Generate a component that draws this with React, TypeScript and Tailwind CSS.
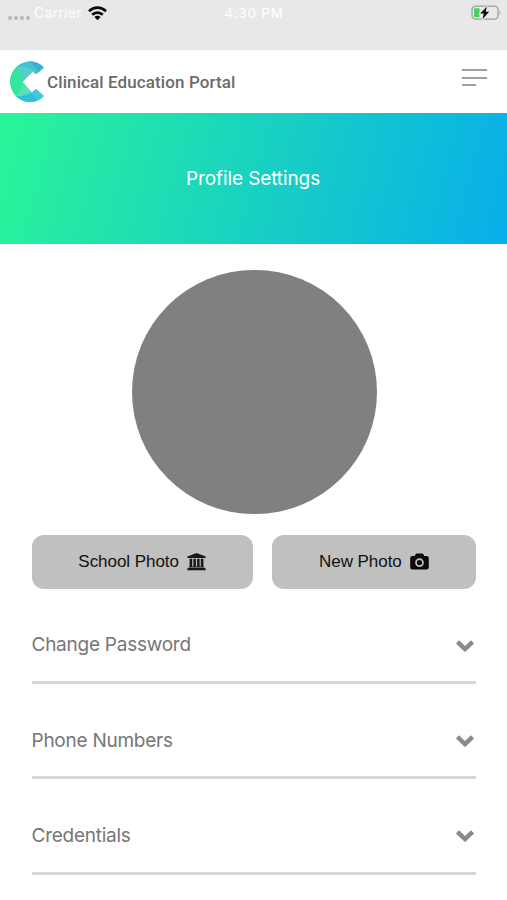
function Wifi() {
  return (
    <svg className="ml-[6px] h-[15px] w-[19px]" viewBox="0 0 19 15" fill="none" stroke="#0b0b0b" strokeWidth="2.7">
      <path d="M1 5.3C5.9 .5 13.1 .5 18 5.3" />
      <path d="M4.2 8.8C7.2 5.8 11.8 5.8 14.8 8.8" />
      <path d="M9.5 14.2 6.3 10.9Q9.5 8.4 12.7 10.9Z" fill="#0b0b0b" stroke="none" />
    </svg>
  );
}

function Battery() {
  return (
    <svg className="h-[16px] w-[31px]" viewBox="0 0 31 16">
      <rect x="1" y="1.2" width="26" height="13" rx="3.6" fill="#e9e9e9" stroke="#9d9d9d" strokeWidth="1.3" />
      <path d="M28.7 5.3Q30.6 7.6 28.7 10Z" fill="#9d9d9d" />
      <rect x="3" y="3.3" width="5.6" height="8.9" rx="1.2" fill="#42d35f" />
      <path d="M16 1.4 9.2 8.6H12.8L11.6 14.1 18.2 6.8H14.6Z" fill="#050505" stroke="#e8e8e8" strokeWidth="1.8" paintOrder="stroke" />
    </svg>
  );
}

function Logo() {
  return (
    <svg className="h-[42px] w-[35px]" viewBox="0 0 35 42">
      <defs>
        <clipPath id="letter">
          <path d="M33.8 6.4C30 2.3 25.5 .4 20.4 .4C9.2 .4 .2 9.4 .2 20.7S9.2 41 20.4 41C25.5 41 30 39 33.8 35L26 27.9 21.8 31.4 12.5 20.7 22.8 10.5 26 13.6Z" />
        </clipPath>
        <linearGradient id="tint" x1="0" x2="1">
          <stop stopColor="#27e59a" />
          <stop offset=".5" stopColor="#4fdcc0" />
          <stop offset="1" stopColor="#25b8d6" />
        </linearGradient>
      </defs>
      <g clipPath="url(#letter)">
        <path d="M0 0H35V42H0Z" fill="url(#tint)" />
        <path d="M6 6Q14 12 14 21Q14 29 6 35Q-6 21 6 6Z" fill="#35e79c" />
        <path d="M6 6Q13 0 20 0L28 8 20 16 12 9Z" fill="#3ec6d0" />
        <path d="M18 0Q26 5 28 12L35 7 29 0Z" fill="#3faed3" />
        <path d="M6 6Q17 5 25 10L14 22Q12 12 6 6Z" fill="#55cdd1" />
        <path d="M6 35Q12 29 13 20L23 31Q15 36 6 35Z" fill="#5bdfb9" />
        <path d="M6 35Q15 36 22 31L32 42H12Z" fill="#2fbfd6" />
        <path d="M20 32 26 27 35 35 30 40Z" fill="#44c8e0" />
      </g>
    </svg>
  );
}

function School() {
  return (
    <svg className="h-[18px] w-[19px]" viewBox="0 0 19 18" fill="#161616">
      <path d="M9.5 0 18.6 3.6V5H.4V3.6Z" />
      <path d="M2.6 5.8H5.2V13.4H6.4V5.8H8.9V13.4H10.1V5.8H12.6V13.4H13.8V5.8H16.4V13.4Q17.5 13.5 17.5 14.5H1.5Q1.5 13.5 2.6 13.4Z" />
      <path d="M1 15.1H18Q18.8 15.3 18.8 17.3H.2Q.2 15.3 1 15.1Z" />
    </svg>
  );
}

function Camera() {
  return (
    <svg className="h-[18px] w-[19px]" viewBox="0 0 19 18">
      <path d="M2.4 2.9H4.7L5.6 1.2Q6 .5 6.8 .5H12.2Q13 .5 13.4 1.2L14.3 2.9H16.6Q18.8 2.9 18.8 5.1V14.3Q18.8 16.5 16.6 16.5H2.4Q.2 16.5 .2 14.3V5.1Q.2 2.9 2.4 2.9Z" fill="#0b0b0b" />
      <circle cx="9.5" cy="9.6" r="3.5" fill="none" stroke="#c0c0c0" strokeWidth="1.7" />
    </svg>
  );
}

function Chevron() {
  return (
    <svg className="mr-[1.5px] h-[12px] w-[18px]" viewBox="0 0 18 12" fill="#8b8b8b">
      <path d="M.4 2.9 2.4 .8Q3 .3 3.6 .8L9 6.1 14.4 .8Q15 .3 15.6 .8L17.6 2.9Q18.1 3.5 17.6 4.1L9.7 11.6Q9 12.1 8.3 11.6L.4 4.1Q-.1 3.5 .4 2.9Z" />
    </svg>
  );
}

const sections = ["Change Password", "Phone Numbers", "Credentials"];

export default function App() {
  return (
    <div className="h-[900px] w-full overflow-hidden bg-white font-['Inter','Liberation_Sans',sans-serif]">
      <div className="grid h-[50px] grid-cols-3 items-start bg-[#e8e8e8] text-[13.5px] leading-[26px] text-white">
        <div className="flex h-[26px] items-center pl-2">
          <span className="mt-[9px] flex gap-[2px]">
            {[0, 1, 2, 3].map((dot) => (
              <i key={dot} className="size-[4px] rounded-full bg-[#b6b6b6]" />
            ))}
          </span>
          <span className="ml-[4px] text-[14px] tracking-[0.3px]">Carrier</span>
          <Wifi />
        </div>
        <span className="pl-[1px] text-center tracking-[0.8px]">4:30 PM</span>
        <div className="flex justify-end pt-[5px] pr-[5px]">
          <Battery />
        </div>
      </div>
      <header className="flex h-[63px] items-center pr-5 pl-[10px]">
        <Logo />
        <span className="mt-[2px] ml-[2px] font-['Roboto',sans-serif] text-[17px] font-medium tracking-[0.1px] whitespace-nowrap text-[#6b6b6b]">Clinical Education Portal</span>
        <div className="mb-[8px] ml-auto flex w-[25px] flex-col gap-[5.5px]">
          <i className="h-[2px] w-[25px] bg-[#a0a0a0]" />
          <i className="h-[2px] w-[25px] bg-[#a0a0a0]" />
          <i className="h-[2px] w-[14px] bg-[#a0a0a0]" />
        </div>
      </header>
      <div className="flex h-[131px] items-center justify-center bg-[linear-gradient(105deg,#2af598_0%,#08aeea_100%)]">
        <h1 className="pt-[2px] pr-[1px] text-[19px] tracking-[-0.1px] text-white">Profile Settings</h1>
      </div>
      <main className="px-[31.5px] pt-[25.5px]">
        <div className="ml-[100.5px] size-[244.5px] rounded-full bg-[#808080]" />
        <div className="mt-[20.5px] flex gap-[19.5px] font-['Liberation_Sans',sans-serif] text-[17px] tracking-[-0.05px] text-[#111111]">
          <button className="flex h-[54px] w-[221.5px] items-center justify-center gap-[8px] rounded-[12px] bg-[#c0c0c0]">
            <span className="pt-[1px]">School Photo</span> <School />
          </button>
          <button className="flex h-[54px] w-[203.5px] items-center justify-center gap-[8px] rounded-[12px] bg-[#c0c0c0]">
            <span className="pt-[1px]">New Photo</span> <Camera />
          </button>
        </div>
        <div className="mt-[15.5px]">
          {sections.map((name) => (
            <div key={name} className="flex h-[80px] items-center justify-between border-b-[3px] border-[#d7d7d7] pt-[6px] text-[19px] tracking-[-0.25px] text-[#767676] not-last:mb-[15.3px]">
              <span>{name}</span>
              <Chevron />
            </div>
          ))}
        </div>
      </main>
    </div>
  );
}
